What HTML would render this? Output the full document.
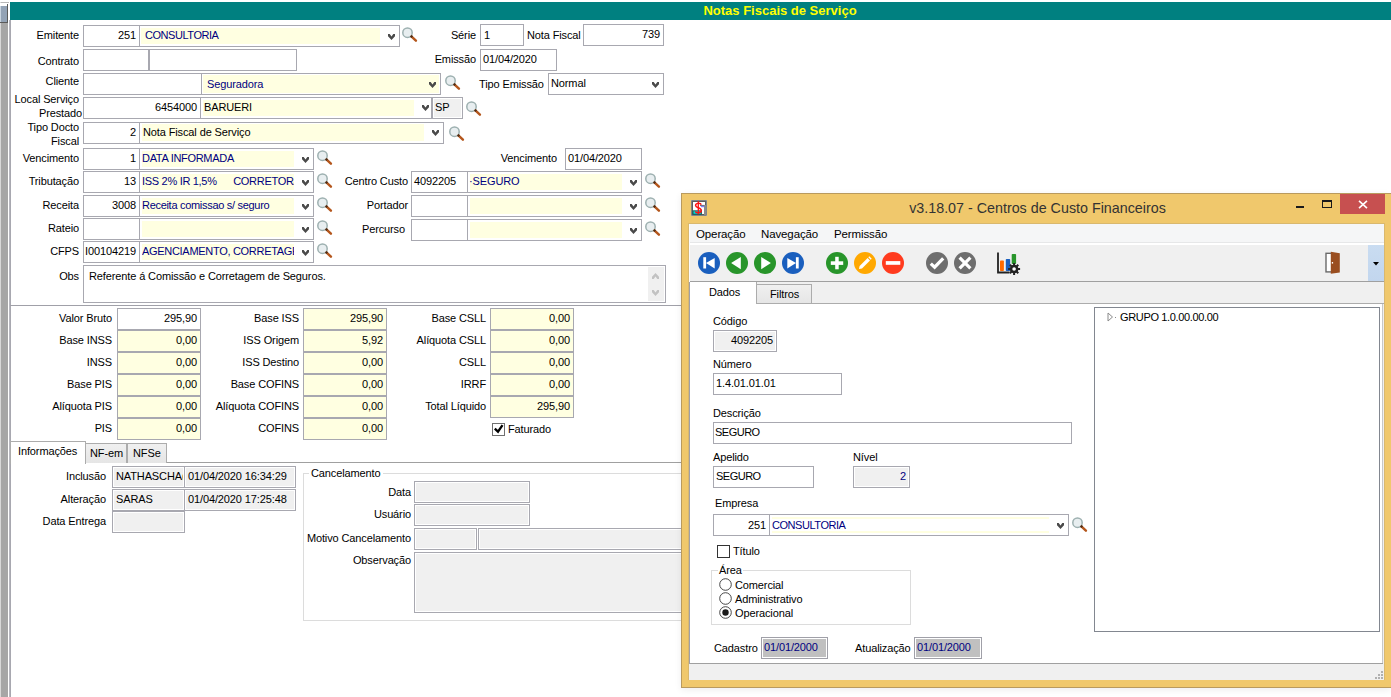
<!DOCTYPE html>
<html><head><meta charset="utf-8">
<style>
*{box-sizing:border-box}
html,body{margin:0;padding:0;width:1391px;height:697px;overflow:hidden;background:#fff;font-family:"Liberation Sans",sans-serif;font-size:11px;color:#000}
.a{position:absolute}
.t{position:absolute;white-space:nowrap;line-height:13px;font-size:11px;letter-spacing:-0.12px}
</style></head><body>

<div class="a" style="left:0px;top:0px;width:1px;height:697px;background:#d8d8d8;"></div>
<div class="a" style="left:1px;top:0px;width:7px;height:697px;background:#a6a6a6;"></div>
<div class="a" style="left:0px;top:0px;width:9px;height:2px;background:#ffffff;"></div>
<div class="a" style="left:1px;top:2px;width:8px;height:1px;background:#b8b8b8;"></div>
<div class="a" style="left:0px;top:3px;width:8px;height:3px;background:#ffffff;"></div>
<div class="a" style="left:0px;top:6px;width:1px;height:16px;background:#c8d4e0;"></div>
<div class="a" style="left:1px;top:6px;width:6px;height:16px;background:#93a3b6;"></div>
<div class="a" style="left:7px;top:4px;width:1px;height:19px;background:#5a5a5a;"></div>
<div class="a" style="left:0px;top:22px;width:8px;height:1px;background:#5a5a5a;"></div>
<div class="a" style="left:9px;top:20px;width:1px;height:677px;background:#b8b8c0;"></div>
<div class="a" style="left:10px;top:20px;width:1px;height:677px;background:#a8a8b0;"></div>
<div class="a" style="left:10px;top:2px;width:1381px;height:18px;background:#008080;"></div>
<div class="a" style="left:10px;top:2px;width:1540px;height:18px;line-height:18px;text-align:center;color:#ffff00;font-weight:bold;font-size:13px">Notas Fiscais de Serviço</div>
<div class="t" style="right:1312px;top:29px;color:#000;font-size:11px;text-align:right;">Emitente</div>
<div class="a" style="left:83px;top:25px;width:57px;height:22px;border:1px solid #a8a8b0;background:#fff;"></div>
<div class="t" style="right:1255px;top:29px;color:#000;font-size:11px;text-align:right;">251</div>
<div class="a" style="left:139px;top:25px;width:261px;height:22px;border:1px solid #a8a8b0;background:#fff;"></div>
<div class="a" style="left:141px;top:28px;width:239px;height:16px;background:#ffffe1;"></div>
<div class="t" style="left:145px;top:29px;color:#000080;font-size:11px;letter-spacing:-0.45px">CONSULTORIA</div>
<svg class="a" style="left:388px;top:34px" width="7" height="6" viewBox="0 0 7 6"><path d="M0 0 L1.7 0 L3.5 2.6 L5.3 0 L7 0 L7 2.3 L3.5 6 L0 2.3 Z" fill="#4a4a4a"/></svg>
<svg class="a" style="left:402px;top:27px" width="17" height="17" viewBox="0 0 17 17"><circle cx="5.5" cy="5.7" r="4.7" fill="#e8eef0" stroke="#9db0b0" stroke-width="1.5"/><path d="M9.6 9.6 L13.9 13.6" stroke="#b4561c" stroke-width="2.5" stroke-linecap="round"/><path d="M8.8 8.9 L10.2 10.2" stroke="#4a2c18" stroke-width="2.5"/></svg>
<div class="t" style="right:915px;top:29px;color:#000;font-size:11px;text-align:right;">Série</div>
<div class="a" style="left:480px;top:24px;width:44px;height:22px;border:1px solid #a8a8b0;background:#fff;"></div>
<div class="t" style="left:484px;top:29px;color:#000;font-size:11px;">1</div>
<div class="t" style="left:527px;top:29px;color:#000;font-size:11px;">Nota Fiscal</div>
<div class="a" style="left:583px;top:24px;width:81px;height:22px;border:1px solid #a8a8b0;background:#fff;"></div>
<div class="t" style="right:731px;top:28px;color:#000;font-size:11px;text-align:right;">739</div>
<div class="t" style="right:1312px;top:55px;color:#000;font-size:11px;text-align:right;">Contrato</div>
<div class="a" style="left:83px;top:49px;width:66px;height:22px;border:1px solid #a8a8b0;background:#fff;"></div>
<div class="a" style="left:149px;top:49px;width:148px;height:22px;border:1px solid #a8a8b0;background:#fff;"></div>
<div class="t" style="right:915px;top:53px;color:#000;font-size:11px;text-align:right;">Emissão</div>
<div class="a" style="left:480px;top:49px;width:77px;height:22px;border:1px solid #a8a8b0;background:#fff;"></div>
<div class="t" style="left:483px;top:53px;color:#000;font-size:11px;">01/04/2020</div>
<div class="t" style="right:1312px;top:75px;color:#000;font-size:11px;text-align:right;">Cliente</div>
<div class="a" style="left:83px;top:73px;width:119px;height:22px;border:1px solid #a8a8b0;background:#fff;"></div>
<div class="a" style="left:201px;top:73px;width:240px;height:22px;border:1px solid #a8a8b0;background:#fff;"></div>
<div class="a" style="left:203px;top:75px;width:236px;height:18px;background:#ffffe1;"></div>
<div class="t" style="left:207px;top:78px;color:#000080;font-size:11px;">Seguradora</div>
<svg class="a" style="left:429px;top:82px" width="7" height="6" viewBox="0 0 7 6"><path d="M0 0 L1.7 0 L3.5 2.6 L5.3 0 L7 0 L7 2.3 L3.5 6 L0 2.3 Z" fill="#4a4a4a"/></svg>
<svg class="a" style="left:445px;top:75px" width="17" height="17" viewBox="0 0 17 17"><circle cx="5.5" cy="5.7" r="4.7" fill="#e8eef0" stroke="#9db0b0" stroke-width="1.5"/><path d="M9.6 9.6 L13.9 13.6" stroke="#b4561c" stroke-width="2.5" stroke-linecap="round"/><path d="M8.8 8.9 L10.2 10.2" stroke="#4a2c18" stroke-width="2.5"/></svg>
<div class="t" style="left:479px;top:78px;color:#000;font-size:11px;">Tipo Emissão</div>
<div class="a" style="left:548px;top:73px;width:116px;height:22px;border:1px solid #a8a8b0;background:#fff;"></div>
<div class="t" style="left:551px;top:77px;color:#000;font-size:11px;">Normal</div>
<svg class="a" style="left:652px;top:82px" width="7" height="6" viewBox="0 0 7 6"><path d="M0 0 L1.7 0 L3.5 2.6 L5.3 0 L7 0 L7 2.3 L3.5 6 L0 2.3 Z" fill="#4a4a4a"/></svg>
<div class="t" style="right:1312px;top:93px;color:#000;font-size:11px;text-align:right;">Local Serviço</div>
<div class="t" style="right:1309px;top:107px;color:#000;font-size:11px;text-align:right;">Prestado</div>
<div class="a" style="left:83px;top:97px;width:118px;height:22px;border:1px solid #a8a8b0;background:#fff;"></div>
<div class="t" style="right:1194px;top:101px;color:#000;font-size:11px;text-align:right;">6454000</div>
<div class="a" style="left:200px;top:97px;width:232px;height:22px;border:1px solid #a8a8b0;background:#fff;"></div>
<div class="a" style="left:203px;top:100px;width:211px;height:16px;background:#ffffe1;"></div>
<div class="t" style="left:204px;top:101px;color:#000;font-size:11px;">BARUERI</div>
<svg class="a" style="left:422px;top:105px" width="7" height="6" viewBox="0 0 7 6"><path d="M0 0 L1.7 0 L3.5 2.6 L5.3 0 L7 0 L7 2.3 L3.5 6 L0 2.3 Z" fill="#4a4a4a"/></svg>
<div class="a" style="left:432px;top:97px;width:31px;height:22px;border:1px solid #a8a8b0;background:#f0f0f0;box-shadow:inset 1px 1px 0 #fff,inset -1px -1px 0 #fff"></div>
<div class="t" style="left:435px;top:101px;color:#000;font-size:11px;">SP</div>
<svg class="a" style="left:466px;top:101px" width="17" height="17" viewBox="0 0 17 17"><circle cx="5.5" cy="5.7" r="4.7" fill="#e8eef0" stroke="#9db0b0" stroke-width="1.5"/><path d="M9.6 9.6 L13.9 13.6" stroke="#b4561c" stroke-width="2.5" stroke-linecap="round"/><path d="M8.8 8.9 L10.2 10.2" stroke="#4a2c18" stroke-width="2.5"/></svg>
<div class="t" style="right:1312px;top:121px;color:#000;font-size:11px;text-align:right;">Tipo Docto</div>
<div class="t" style="right:1312px;top:135px;color:#000;font-size:11px;text-align:right;">Fiscal</div>
<div class="a" style="left:83px;top:122px;width:57px;height:22px;border:1px solid #a8a8b0;background:#fff;"></div>
<div class="t" style="right:1255px;top:126px;color:#000;font-size:11px;text-align:right;">2</div>
<div class="a" style="left:139px;top:122px;width:305px;height:22px;border:1px solid #a8a8b0;background:#fff;"></div>
<div class="a" style="left:142px;top:124px;width:282px;height:17px;background:#ffffe1;"></div>
<div class="t" style="left:143px;top:126px;color:#000;font-size:11px;">Nota Fiscal de Serviço</div>
<svg class="a" style="left:432px;top:130px" width="7" height="6" viewBox="0 0 7 6"><path d="M0 0 L1.7 0 L3.5 2.6 L5.3 0 L7 0 L7 2.3 L3.5 6 L0 2.3 Z" fill="#4a4a4a"/></svg>
<svg class="a" style="left:449px;top:126px" width="17" height="17" viewBox="0 0 17 17"><circle cx="5.5" cy="5.7" r="4.7" fill="#e8eef0" stroke="#9db0b0" stroke-width="1.5"/><path d="M9.6 9.6 L13.9 13.6" stroke="#b4561c" stroke-width="2.5" stroke-linecap="round"/><path d="M8.8 8.9 L10.2 10.2" stroke="#4a2c18" stroke-width="2.5"/></svg>
<div class="t" style="right:1312px;top:152px;color:#000;font-size:11px;text-align:right;">Vencimento</div>
<div class="a" style="left:83px;top:148px;width:57px;height:22px;border:1px solid #a8a8b0;background:#fff;"></div>
<div class="t" style="right:1255px;top:152px;color:#000;font-size:11px;text-align:right;">1</div>
<div class="a" style="left:139px;top:148px;width:175px;height:22px;border:1px solid #a8a8b0;background:#fff;"></div>
<div class="a" style="left:142px;top:151px;width:152px;height:16px;background:#ffffe1;"></div>
<div class="t" style="left:142px;top:152px;color:#000080;font-size:11px;width:152px;overflow:hidden;letter-spacing:-0.3px">DATA INFORMADA</div>
<svg class="a" style="left:302px;top:157px" width="7" height="6" viewBox="0 0 7 6"><path d="M0 0 L1.7 0 L3.5 2.6 L5.3 0 L7 0 L7 2.3 L3.5 6 L0 2.3 Z" fill="#4a4a4a"/></svg>
<svg class="a" style="left:317px;top:150px" width="17" height="17" viewBox="0 0 17 17"><circle cx="5.5" cy="5.7" r="4.7" fill="#e8eef0" stroke="#9db0b0" stroke-width="1.5"/><path d="M9.6 9.6 L13.9 13.6" stroke="#b4561c" stroke-width="2.5" stroke-linecap="round"/><path d="M8.8 8.9 L10.2 10.2" stroke="#4a2c18" stroke-width="2.5"/></svg>
<div class="t" style="right:1312px;top:175px;color:#000;font-size:11px;text-align:right;">Tributação</div>
<div class="a" style="left:83px;top:171px;width:57px;height:22px;border:1px solid #a8a8b0;background:#fff;"></div>
<div class="t" style="right:1255px;top:175px;color:#000;font-size:11px;text-align:right;">13</div>
<div class="a" style="left:139px;top:171px;width:175px;height:22px;border:1px solid #a8a8b0;background:#fff;"></div>
<div class="a" style="left:142px;top:174px;width:152px;height:16px;background:#ffffe1;"></div>
<div class="t" style="left:142px;top:175px;color:#000080;font-size:11px;width:152px;overflow:hidden;letter-spacing:-0.3px">ISS 2% IR 1,5% &nbsp;&nbsp;&nbsp;&nbsp; CORRETOR/</div>
<svg class="a" style="left:302px;top:180px" width="7" height="6" viewBox="0 0 7 6"><path d="M0 0 L1.7 0 L3.5 2.6 L5.3 0 L7 0 L7 2.3 L3.5 6 L0 2.3 Z" fill="#4a4a4a"/></svg>
<svg class="a" style="left:317px;top:173px" width="17" height="17" viewBox="0 0 17 17"><circle cx="5.5" cy="5.7" r="4.7" fill="#e8eef0" stroke="#9db0b0" stroke-width="1.5"/><path d="M9.6 9.6 L13.9 13.6" stroke="#b4561c" stroke-width="2.5" stroke-linecap="round"/><path d="M8.8 8.9 L10.2 10.2" stroke="#4a2c18" stroke-width="2.5"/></svg>
<div class="t" style="right:1312px;top:199px;color:#000;font-size:11px;text-align:right;">Receita</div>
<div class="a" style="left:83px;top:195px;width:57px;height:22px;border:1px solid #a8a8b0;background:#fff;"></div>
<div class="t" style="right:1255px;top:199px;color:#000;font-size:11px;text-align:right;">3008</div>
<div class="a" style="left:139px;top:195px;width:175px;height:22px;border:1px solid #a8a8b0;background:#fff;"></div>
<div class="a" style="left:142px;top:198px;width:152px;height:16px;background:#ffffe1;"></div>
<div class="t" style="left:142px;top:199px;color:#000080;font-size:11px;width:152px;overflow:hidden;letter-spacing:-0.3px">Receita comissao s/ seguro</div>
<svg class="a" style="left:302px;top:204px" width="7" height="6" viewBox="0 0 7 6"><path d="M0 0 L1.7 0 L3.5 2.6 L5.3 0 L7 0 L7 2.3 L3.5 6 L0 2.3 Z" fill="#4a4a4a"/></svg>
<svg class="a" style="left:317px;top:197px" width="17" height="17" viewBox="0 0 17 17"><circle cx="5.5" cy="5.7" r="4.7" fill="#e8eef0" stroke="#9db0b0" stroke-width="1.5"/><path d="M9.6 9.6 L13.9 13.6" stroke="#b4561c" stroke-width="2.5" stroke-linecap="round"/><path d="M8.8 8.9 L10.2 10.2" stroke="#4a2c18" stroke-width="2.5"/></svg>
<div class="t" style="right:1312px;top:222px;color:#000;font-size:11px;text-align:right;">Rateio</div>
<div class="a" style="left:83px;top:218px;width:57px;height:22px;border:1px solid #a8a8b0;background:#fff;"></div>
<div class="a" style="left:139px;top:218px;width:175px;height:22px;border:1px solid #a8a8b0;background:#fff;"></div>
<div class="a" style="left:142px;top:221px;width:152px;height:16px;background:#ffffe1;"></div>
<svg class="a" style="left:302px;top:227px" width="7" height="6" viewBox="0 0 7 6"><path d="M0 0 L1.7 0 L3.5 2.6 L5.3 0 L7 0 L7 2.3 L3.5 6 L0 2.3 Z" fill="#4a4a4a"/></svg>
<svg class="a" style="left:317px;top:220px" width="17" height="17" viewBox="0 0 17 17"><circle cx="5.5" cy="5.7" r="4.7" fill="#e8eef0" stroke="#9db0b0" stroke-width="1.5"/><path d="M9.6 9.6 L13.9 13.6" stroke="#b4561c" stroke-width="2.5" stroke-linecap="round"/><path d="M8.8 8.9 L10.2 10.2" stroke="#4a2c18" stroke-width="2.5"/></svg>
<div class="t" style="right:1312px;top:245px;color:#000;font-size:11px;text-align:right;">CFPS</div>
<div class="a" style="left:83px;top:241px;width:57px;height:22px;border:1px solid #a8a8b0;background:#fff;"></div>
<div class="t" style="right:1255px;top:245px;color:#000;font-size:11px;text-align:right;">I00104219</div>
<div class="a" style="left:139px;top:241px;width:175px;height:22px;border:1px solid #a8a8b0;background:#fff;"></div>
<div class="a" style="left:142px;top:244px;width:152px;height:16px;background:#ffffe1;"></div>
<div class="t" style="left:142px;top:245px;color:#000080;font-size:11px;width:152px;overflow:hidden;letter-spacing:-0.3px">AGENCIAMENTO, CORRETAGEI</div>
<svg class="a" style="left:302px;top:250px" width="7" height="6" viewBox="0 0 7 6"><path d="M0 0 L1.7 0 L3.5 2.6 L5.3 0 L7 0 L7 2.3 L3.5 6 L0 2.3 Z" fill="#4a4a4a"/></svg>
<svg class="a" style="left:317px;top:243px" width="17" height="17" viewBox="0 0 17 17"><circle cx="5.5" cy="5.7" r="4.7" fill="#e8eef0" stroke="#9db0b0" stroke-width="1.5"/><path d="M9.6 9.6 L13.9 13.6" stroke="#b4561c" stroke-width="2.5" stroke-linecap="round"/><path d="M8.8 8.9 L10.2 10.2" stroke="#4a2c18" stroke-width="2.5"/></svg>
<div class="t" style="right:834px;top:152px;color:#000;font-size:11px;text-align:right;">Vencimento</div>
<div class="a" style="left:565px;top:148px;width:77px;height:22px;border:1px solid #a8a8b0;background:#fff;"></div>
<div class="t" style="left:568px;top:152px;color:#000;font-size:11px;">01/04/2020</div>
<div class="t" style="right:983px;top:175px;color:#000;font-size:11px;text-align:right;">Centro Custo</div>
<div class="a" style="left:411px;top:171px;width:57px;height:22px;border:1px solid #a8a8b0;background:#fff;"></div>
<div class="t" style="left:414px;top:175px;color:#000;font-size:11px;">4092205</div>
<div class="a" style="left:467px;top:171px;width:175px;height:22px;border:1px solid #a8a8b0;background:#fff;"></div>
<div class="a" style="left:470px;top:174px;width:152px;height:16px;background:#ffffe1;"></div>
<div class="t" style="left:469px;top:175px;color:#000080;font-size:11px;">·SEGURO</div>
<svg class="a" style="left:630px;top:180px" width="7" height="6" viewBox="0 0 7 6"><path d="M0 0 L1.7 0 L3.5 2.6 L5.3 0 L7 0 L7 2.3 L3.5 6 L0 2.3 Z" fill="#4a4a4a"/></svg>
<svg class="a" style="left:645px;top:173px" width="17" height="17" viewBox="0 0 17 17"><circle cx="5.5" cy="5.7" r="4.7" fill="#e8eef0" stroke="#9db0b0" stroke-width="1.5"/><path d="M9.6 9.6 L13.9 13.6" stroke="#b4561c" stroke-width="2.5" stroke-linecap="round"/><path d="M8.8 8.9 L10.2 10.2" stroke="#4a2c18" stroke-width="2.5"/></svg>
<div class="t" style="right:983px;top:199px;color:#000;font-size:11px;text-align:right;">Portador</div>
<div class="a" style="left:411px;top:195px;width:57px;height:22px;border:1px solid #a8a8b0;background:#fff;"></div>
<div class="a" style="left:467px;top:195px;width:175px;height:22px;border:1px solid #a8a8b0;background:#fff;"></div>
<div class="a" style="left:470px;top:198px;width:152px;height:16px;background:#ffffe1;"></div>
<svg class="a" style="left:630px;top:204px" width="7" height="6" viewBox="0 0 7 6"><path d="M0 0 L1.7 0 L3.5 2.6 L5.3 0 L7 0 L7 2.3 L3.5 6 L0 2.3 Z" fill="#4a4a4a"/></svg>
<svg class="a" style="left:645px;top:197px" width="17" height="17" viewBox="0 0 17 17"><circle cx="5.5" cy="5.7" r="4.7" fill="#e8eef0" stroke="#9db0b0" stroke-width="1.5"/><path d="M9.6 9.6 L13.9 13.6" stroke="#b4561c" stroke-width="2.5" stroke-linecap="round"/><path d="M8.8 8.9 L10.2 10.2" stroke="#4a2c18" stroke-width="2.5"/></svg>
<div class="t" style="right:986px;top:223px;color:#000;font-size:11px;text-align:right;">Percurso</div>
<div class="a" style="left:411px;top:219px;width:57px;height:22px;border:1px solid #a8a8b0;background:#fff;"></div>
<div class="a" style="left:467px;top:219px;width:175px;height:22px;border:1px solid #a8a8b0;background:#fff;"></div>
<div class="a" style="left:470px;top:222px;width:152px;height:16px;background:#ffffe1;"></div>
<svg class="a" style="left:630px;top:228px" width="7" height="6" viewBox="0 0 7 6"><path d="M0 0 L1.7 0 L3.5 2.6 L5.3 0 L7 0 L7 2.3 L3.5 6 L0 2.3 Z" fill="#4a4a4a"/></svg>
<svg class="a" style="left:645px;top:221px" width="17" height="17" viewBox="0 0 17 17"><circle cx="5.5" cy="5.7" r="4.7" fill="#e8eef0" stroke="#9db0b0" stroke-width="1.5"/><path d="M9.6 9.6 L13.9 13.6" stroke="#b4561c" stroke-width="2.5" stroke-linecap="round"/><path d="M8.8 8.9 L10.2 10.2" stroke="#4a2c18" stroke-width="2.5"/></svg>
<div class="t" style="right:1312px;top:270px;color:#000;font-size:11px;text-align:right;">Obs</div>
<div class="a" style="left:83px;top:265px;width:583px;height:38px;border:1px solid #a8a8b0;background:#fff;"></div>
<div class="t" style="left:89px;top:270px;color:#000;font-size:11px;">Referente á Comissão e Corretagem de Seguros.</div>
<div class="a" style="left:648px;top:267px;width:16px;height:34px;background:#f0f0f0;"></div>
<svg class="a" style="left:652px;top:273px" width="7" height="6" viewBox="0 0 7 6"><path d="M0 6 L1.7 6 L3.5 3.4 L5.3 6 L7 6 L7 3.7 L3.5 0 L0 3.7 Z" fill="#c2c2c2"/></svg>
<svg class="a" style="left:652px;top:290px" width="7" height="6" viewBox="0 0 7 6"><path d="M0 0 L1.7 0 L3.5 2.6 L5.3 0 L7 0 L7 2.3 L3.5 6 L0 2.3 Z" fill="#c2c2c2"/></svg>
<div class="a" style="left:10px;top:305px;width:671px;height:1px;background:#a0a0a8;"></div>
<div class="t" style="right:1279px;top:312px;color:#000;font-size:11px;text-align:right;">Valor Bruto</div>
<div class="a" style="left:117px;top:308px;width:84px;height:22px;border:1px solid #a8a8b0;background:#fff;"></div>
<div class="t" style="right:1194px;top:312px;color:#000;font-size:11px;text-align:right;">295,90</div>
<div class="t" style="right:1279px;top:334px;color:#000;font-size:11px;text-align:right;">Base INSS</div>
<div class="a" style="left:117px;top:330px;width:84px;height:22px;border:1px solid #a8a8b0;background:#ffffe1;"></div>
<div class="t" style="right:1194px;top:334px;color:#000;font-size:11px;text-align:right;">0,00</div>
<div class="t" style="right:1279px;top:356px;color:#000;font-size:11px;text-align:right;">INSS</div>
<div class="a" style="left:117px;top:352px;width:84px;height:22px;border:1px solid #a8a8b0;background:#ffffe1;"></div>
<div class="t" style="right:1194px;top:356px;color:#000;font-size:11px;text-align:right;">0,00</div>
<div class="t" style="right:1279px;top:378px;color:#000;font-size:11px;text-align:right;">Base PIS</div>
<div class="a" style="left:117px;top:374px;width:84px;height:22px;border:1px solid #a8a8b0;background:#ffffe1;"></div>
<div class="t" style="right:1194px;top:378px;color:#000;font-size:11px;text-align:right;">0,00</div>
<div class="t" style="right:1279px;top:400px;color:#000;font-size:11px;text-align:right;">Alíquota PIS</div>
<div class="a" style="left:117px;top:396px;width:84px;height:22px;border:1px solid #a8a8b0;background:#ffffe1;"></div>
<div class="t" style="right:1194px;top:400px;color:#000;font-size:11px;text-align:right;">0,00</div>
<div class="t" style="right:1279px;top:422px;color:#000;font-size:11px;text-align:right;">PIS</div>
<div class="a" style="left:117px;top:418px;width:84px;height:22px;border:1px solid #a8a8b0;background:#ffffe1;"></div>
<div class="t" style="right:1194px;top:422px;color:#000;font-size:11px;text-align:right;">0,00</div>
<div class="t" style="right:1092px;top:312px;color:#000;font-size:11px;text-align:right;">Base ISS</div>
<div class="a" style="left:303px;top:308px;width:84px;height:22px;border:1px solid #a8a8b0;background:#ffffe1;"></div>
<div class="t" style="right:1008px;top:312px;color:#000;font-size:11px;text-align:right;">295,90</div>
<div class="t" style="right:1092px;top:334px;color:#000;font-size:11px;text-align:right;">ISS Origem</div>
<div class="a" style="left:303px;top:330px;width:84px;height:22px;border:1px solid #a8a8b0;background:#ffffe1;"></div>
<div class="t" style="right:1008px;top:334px;color:#000;font-size:11px;text-align:right;">5,92</div>
<div class="t" style="right:1092px;top:356px;color:#000;font-size:11px;text-align:right;">ISS Destino</div>
<div class="a" style="left:303px;top:352px;width:84px;height:22px;border:1px solid #a8a8b0;background:#ffffe1;"></div>
<div class="t" style="right:1008px;top:356px;color:#000;font-size:11px;text-align:right;">0,00</div>
<div class="t" style="right:1092px;top:378px;color:#000;font-size:11px;text-align:right;">Base COFINS</div>
<div class="a" style="left:303px;top:374px;width:84px;height:22px;border:1px solid #a8a8b0;background:#ffffe1;"></div>
<div class="t" style="right:1008px;top:378px;color:#000;font-size:11px;text-align:right;">0,00</div>
<div class="t" style="right:1092px;top:400px;color:#000;font-size:11px;text-align:right;">Alíquota COFINS</div>
<div class="a" style="left:303px;top:396px;width:84px;height:22px;border:1px solid #a8a8b0;background:#ffffe1;"></div>
<div class="t" style="right:1008px;top:400px;color:#000;font-size:11px;text-align:right;">0,00</div>
<div class="t" style="right:1092px;top:422px;color:#000;font-size:11px;text-align:right;">COFINS</div>
<div class="a" style="left:303px;top:418px;width:84px;height:22px;border:1px solid #a8a8b0;background:#ffffe1;"></div>
<div class="t" style="right:1008px;top:422px;color:#000;font-size:11px;text-align:right;">0,00</div>
<div class="t" style="right:905px;top:312px;color:#000;font-size:11px;text-align:right;">Base CSLL</div>
<div class="a" style="left:490px;top:308px;width:84px;height:22px;border:1px solid #a8a8b0;background:#ffffe1;"></div>
<div class="t" style="right:821px;top:312px;color:#000;font-size:11px;text-align:right;">0,00</div>
<div class="t" style="right:905px;top:334px;color:#000;font-size:11px;text-align:right;">Alíquota CSLL</div>
<div class="a" style="left:490px;top:330px;width:84px;height:22px;border:1px solid #a8a8b0;background:#ffffe1;"></div>
<div class="t" style="right:821px;top:334px;color:#000;font-size:11px;text-align:right;">0,00</div>
<div class="t" style="right:905px;top:356px;color:#000;font-size:11px;text-align:right;">CSLL</div>
<div class="a" style="left:490px;top:352px;width:84px;height:22px;border:1px solid #a8a8b0;background:#ffffe1;"></div>
<div class="t" style="right:821px;top:356px;color:#000;font-size:11px;text-align:right;">0,00</div>
<div class="t" style="right:905px;top:378px;color:#000;font-size:11px;text-align:right;">IRRF</div>
<div class="a" style="left:490px;top:374px;width:84px;height:22px;border:1px solid #a8a8b0;background:#ffffe1;"></div>
<div class="t" style="right:821px;top:378px;color:#000;font-size:11px;text-align:right;">0,00</div>
<div class="t" style="right:905px;top:400px;color:#000;font-size:11px;text-align:right;">Total Líquido</div>
<div class="a" style="left:490px;top:396px;width:84px;height:22px;border:1px solid #a8a8b0;background:#ffffe1;"></div>
<div class="t" style="right:821px;top:400px;color:#000;font-size:11px;text-align:right;">295,90</div>
<div class="a" style="left:492px;top:423px;width:13px;height:13px;border:1px solid #707070;background:#fff;"></div>
<svg class="a" style="left:492px;top:423px" width="13" height="13" viewBox="0 0 13 13"><path d="M2.8 5.7 L6 8.7 L10.5 2.2" fill="none" stroke="#000" stroke-width="2.3"/></svg>
<div class="t" style="left:508px;top:423px;color:#000;font-size:11px;">Faturado</div>
<div class="a" style="left:10px;top:462px;width:671px;height:1px;background:#a0a0a0;"></div>
<div class="a" style="left:85px;top:443px;width:42px;height:20px;border:1px solid #acacac;border-bottom:none;background:linear-gradient(#f0f0f0,#e5e5e5)"></div>
<div class="a" style="left:127px;top:443px;width:40px;height:20px;border:1px solid #acacac;border-bottom:none;background:linear-gradient(#f0f0f0,#e5e5e5)"></div>
<div class="a" style="left:10px;top:441px;width:76px;height:23px;border:1px solid #acacac;border-bottom:none;background:#fff"></div>
<div class="t" style="left:18px;top:445px;color:#000;font-size:11px;">Informações</div>
<div class="t" style="left:90px;top:447px;color:#000;font-size:11px;">NF-em</div>
<div class="t" style="left:133px;top:447px;color:#000;font-size:11px;">NFSe</div>
<div class="t" style="right:1285px;top:470px;color:#000;font-size:11px;text-align:right;">Inclusão</div>
<div class="a" style="left:112px;top:466px;width:73px;height:22px;border:1px solid #a8a8b0;background:#f0f0f0;box-shadow:inset 1px 1px 0 #fff,inset -1px -1px 0 #fff"></div>
<div class="t" style="left:116px;top:470px;color:#000;font-size:11px;width:67px;overflow:hidden">NATHASCHA(</div>
<div class="a" style="left:184px;top:466px;width:112px;height:22px;border:1px solid #a8a8b0;background:#f0f0f0;box-shadow:inset 1px 1px 0 #fff,inset -1px -1px 0 #fff"></div>
<div class="t" style="left:188px;top:470px;color:#000;font-size:11px;">01/04/2020 16:34:29</div>
<div class="t" style="right:1285px;top:493px;color:#000;font-size:11px;text-align:right;">Alteração</div>
<div class="a" style="left:112px;top:489px;width:73px;height:22px;border:1px solid #a8a8b0;background:#f0f0f0;box-shadow:inset 1px 1px 0 #fff,inset -1px -1px 0 #fff"></div>
<div class="t" style="left:116px;top:493px;color:#000;font-size:11px;">SARAS</div>
<div class="a" style="left:184px;top:489px;width:112px;height:22px;border:1px solid #a8a8b0;background:#f0f0f0;box-shadow:inset 1px 1px 0 #fff,inset -1px -1px 0 #fff"></div>
<div class="t" style="left:188px;top:493px;color:#000;font-size:11px;">01/04/2020 17:25:48</div>
<div class="t" style="right:1285px;top:515px;color:#000;font-size:11px;text-align:right;">Data Entrega</div>
<div class="a" style="left:112px;top:511px;width:73px;height:22px;border:1px solid #a8a8b0;background:#f0f0f0;box-shadow:inset 1px 1px 0 #fff,inset -1px -1px 0 #fff"></div>
<div class="a" style="left:303px;top:473px;width:400px;height:148px;border:1px solid #dcdcdc"></div>
<div class="t" style="left:309px;top:467px;background:#fff;padding:0 2px">Cancelamento</div>
<div class="t" style="right:980px;top:486px;color:#000;font-size:11px;text-align:right;">Data</div>
<div class="a" style="left:414px;top:481px;width:116px;height:22px;border:1px solid #a8a8b0;background:#f0f0f0;box-shadow:inset 1px 1px 0 #fff,inset -1px -1px 0 #fff"></div>
<div class="t" style="right:980px;top:508px;color:#000;font-size:11px;text-align:right;">Usuário</div>
<div class="a" style="left:414px;top:504px;width:116px;height:22px;border:1px solid #a8a8b0;background:#f0f0f0;box-shadow:inset 1px 1px 0 #fff,inset -1px -1px 0 #fff"></div>
<div class="t" style="right:980px;top:532px;color:#000;font-size:11px;text-align:right;">Motivo Cancelamento</div>
<div class="a" style="left:414px;top:528px;width:63px;height:22px;border:1px solid #a8a8b0;background:#f0f0f0;box-shadow:inset 1px 1px 0 #fff,inset -1px -1px 0 #fff"></div>
<div class="a" style="left:478px;top:528px;width:222px;height:22px;border:1px solid #a8a8b0;background:#f0f0f0;box-shadow:inset 1px 1px 0 #fff,inset -1px -1px 0 #fff"></div>
<div class="t" style="right:980px;top:554px;color:#000;font-size:11px;text-align:right;">Observação</div>
<div class="a" style="left:414px;top:552px;width:286px;height:61px;border:1px solid #a8a8b0;background:#f0f0f0;box-shadow:inset 1px 1px 0 #fff,inset -1px -1px 0 #fff"></div>
<div class="a" style="left:681px;top:193px;width:710px;height:495px;background:#f0c86c;border:1px solid #b99a5e;border-right:none;box-shadow:0 2px 7px rgba(0,0,0,0.07)"></div>
<svg class="a" style="left:691px;top:200px" width="16" height="16" viewBox="0 0 16 16"><rect x="0" y="0" width="16" height="16" fill="#b4bccb"/><rect x="1.2" y="1.2" width="13.6" height="13.6" fill="#fff" stroke="#5e5e5e" stroke-width="1.6"/><path d="M9 5.5 L14 5.5" stroke="#707070" stroke-width="1.2"/><rect x="13" y="5" width="2" height="10" fill="#8a8a8a"/><rect x="2" y="10.8" width="8.5" height="3.4" fill="#00d8d8" stroke="#0a5050" stroke-width="0.8"/><rect x="10" y="5.8" width="3" height="1.4" fill="#8080ff"/><path d="M10.3 4.6 C9.5 2.8 4.2 2.8 4.6 5.6 C5 8 10.6 7.6 10.3 10.6 C10 13.2 4.8 13.2 4.4 11.4" fill="none" stroke="#ff1010" stroke-width="1.5"/><path d="M7.3 1.3 L7.3 14.3" stroke="#ff1010" stroke-width="1.3"/></svg>
<div class="a" style="left:895px;top:199px;width:285px;text-align:center;font-size:14.3px;line-height:18px;color:#333;white-space:nowrap">v3.18.07 - Centros de Custo Financeiros</div>
<div class="a" style="left:1296px;top:206px;width:8px;height:2px;background:#1a1a1a;"></div>
<div class="a" style="left:1322px;top:200px;width:10px;height:8px;border:1px solid #1a1a1a;border-top:2px solid #1a1a1a"></div>
<div class="a" style="left:1340px;top:194px;width:45px;height:20px;background:#c75050;"></div>
<svg class="a" style="left:1358px;top:200px" width="10" height="9" viewBox="0 0 10 9"><path d="M1 0.8 L9 8.2 M9 0.8 L1 8.2" stroke="#fff" stroke-width="1.6"/></svg>
<div class="a" style="left:688px;top:223px;width:697px;height:457px;background:#d9b86e;"></div>
<div class="a" style="left:689px;top:224px;width:695px;height:456px;background:#f0f0f0;"></div>
<div class="a" style="left:689px;top:224px;width:1px;height:58px;background:#fbfbfc;"></div>
<div class="a" style="left:690px;top:224px;width:694px;height:18px;background:#f5f6f7;"></div>
<div class="a" style="left:690px;top:242px;width:694px;height:1px;background:#e6e7e8;"></div>
<div class="a" style="left:690px;top:243px;width:694px;height:2px;background:#ffffff;"></div>
<div class="t" style="left:696px;top:227px;font-size:11.5px;line-height:14px;color:#000">Operação</div>
<div class="t" style="left:761px;top:227px;font-size:11.5px;line-height:14px;color:#000">Navegação</div>
<div class="t" style="left:834px;top:227px;font-size:11.5px;line-height:14px;color:#000">Permissão</div>
<div class="a" style="left:690px;top:245px;width:694px;height:36px;background:#f0f0f0;"></div>
<div class="a" style="left:690px;top:281px;width:694px;height:1px;background:#a0a0a0;"></div>
<div class="a" style="left:1368px;top:245px;width:16px;height:36px;background:linear-gradient(#c9dcf1,#c2d6ee)"></div>
<svg class="a" style="left:1373px;top:262px" width="6" height="4" viewBox="0 0 6 4"><path d="M0 0 L6 0 L3 3.6 Z" fill="#000"/></svg>
<svg class="a" style="left:698px;top:252px" width="22" height="22" viewBox="0 0 22 22"><circle cx="11" cy="11" r="11" fill="#1a5fbe"/><rect x="5.3" y="5.2" width="2.8" height="11.3" fill="#fff"/><path d="M8 11 L16.7 6 L16.7 16.5 Z" fill="#fff"/></svg>
<svg class="a" style="left:726px;top:252px" width="22" height="22" viewBox="0 0 22 22"><circle cx="11" cy="11" r="11" fill="#28952a"/><path d="M5.1 11 L14.8 5 L14.8 17.3 Z" fill="#fff"/></svg>
<svg class="a" style="left:754px;top:252px" width="22" height="22" viewBox="0 0 22 22"><circle cx="11" cy="11" r="11" fill="#28952a"/><path d="M16.9 11 L7.2 5 L7.2 17.3 Z" fill="#fff"/></svg>
<svg class="a" style="left:782px;top:252px" width="22" height="22" viewBox="0 0 22 22"><circle cx="11" cy="11" r="11" fill="#1a5fbe"/><rect x="13.9" y="5.2" width="2.8" height="11.3" fill="#fff"/><path d="M14 11 L5.3 6 L5.3 16.5 Z" fill="#fff"/></svg>
<svg class="a" style="left:826px;top:252px" width="22" height="22" viewBox="0 0 22 22"><circle cx="11" cy="11" r="11" fill="#28952a"/><rect x="4.8" y="9.3" width="12.4" height="3.6" fill="#fff"/><rect x="9.2" y="4.8" width="3.5" height="12.5" fill="#fff"/></svg>
<svg class="a" style="left:854px;top:252px" width="22" height="22" viewBox="0 0 22 22"><circle cx="11" cy="11" r="11" fill="#ffa800"/><path d="M5 17 L5.6 14 L13.6 6 L16 8.4 L8 16.4 Z" fill="#fff"/><path d="M14.3 5.3 L15.3 4.3 L17.7 6.7 L16.7 7.7 Z" fill="#fff"/></svg>
<svg class="a" style="left:882px;top:252px" width="22" height="22" viewBox="0 0 22 22"><circle cx="11" cy="11" r="11" fill="#ff3b1e"/><rect x="3.8" y="9.1" width="14.5" height="3.7" fill="#fff"/></svg>
<svg class="a" style="left:926px;top:252px" width="22" height="22" viewBox="0 0 22 22"><circle cx="11" cy="11" r="11" fill="#6e6e6e"/><path d="M4.8 11.6 L8.6 15.2 L17.2 6.4" fill="none" stroke="#fff" stroke-width="3.2"/></svg>
<svg class="a" style="left:954px;top:252px" width="22" height="22" viewBox="0 0 22 22"><circle cx="11" cy="11" r="11" fill="#6e6e6e"/><path d="M5.6 5.6 L16.4 16.4 M16.4 5.6 L5.6 16.4" stroke="#fff" stroke-width="3.2"/></svg>
<svg class="a" style="left:996px;top:251px" width="26" height="24" viewBox="0 0 26 24"><path d="M2 1.5 L2 21.5 L13.5 21.5" fill="none" stroke="#222" stroke-width="1.8"/><rect x="4" y="9.5" width="3.9" height="10.5" rx="0.8" fill="#ff6a00"/><rect x="9.8" y="8" width="4.4" height="12" rx="0.8" fill="#1a5fbe"/><rect x="15.7" y="3" width="4.4" height="10" rx="0.8" fill="#28952a"/><g transform="translate(18.1,18)"><circle r="4.3" fill="#222"/><path d="M0 -6 L0 6 M-6 0 L6 0 M-4.2 -4.2 L4.2 4.2 M4.2 -4.2 L-4.2 4.2" stroke="#222" stroke-width="2"/><circle r="1.8" fill="#fff"/></g></svg>
<svg class="a" style="left:1324px;top:251px" width="18" height="24" viewBox="0 0 18 24"><rect x="2" y="2.3" width="6" height="18.6" fill="#fff" stroke="#6a6a6a" stroke-width="1.4"/><path d="M6.8 0.7 L15.8 2.2 L15.8 21.5 L6.8 22.7 Z" fill="#9a4e20"/><rect x="7.8" y="11" width="1.3" height="1.6" fill="#fff"/></svg>
<div class="a" style="left:690px;top:282px;width:694px;height:21px;background:#f0f0f0;"></div>
<div class="a" style="left:756px;top:284px;width:56px;height:20px;border:1px solid #acacac;border-bottom:none;background:linear-gradient(#f0f0f0,#e5e5e5)"></div>
<div class="a" style="left:690px;top:282px;width:67px;height:22px;background:#fff;"></div>
<div class="a" style="left:756px;top:282px;width:1px;height:22px;background:#acacac;"></div>
<div class="t" style="left:709px;top:286px;color:#000;font-size:11px;">Dados</div>
<div class="t" style="left:770px;top:288px;color:#000;font-size:11px;">Filtros</div>
<div class="a" style="left:757px;top:303px;width:627px;height:1px;background:#acacac;"></div>
<div class="a" style="left:690px;top:304px;width:693px;height:360px;background:#fff;"></div>
<div class="a" style="left:1382px;top:304px;width:1px;height:360px;background:#c8c8c8;"></div>
<div class="a" style="left:689px;top:663px;width:694px;height:1px;background:#a0a0a0;"></div>
<div class="a" style="left:689px;top:282px;width:1px;height:382px;background:#a0a0a8;"></div>
<div class="a" style="left:689px;top:664px;width:695px;height:16px;background:#f0f0f0;"></div>
<div class="a" style="left:1375px;top:671px;width:8px;height:8px;background:#f0f0f0;"></div>
<svg class="a" style="left:1374px;top:670px" width="10" height="10" viewBox="0 0 10 10" fill="#b0b0b0"><rect x="7" y="1" width="2" height="2"/><rect x="7" y="4" width="2" height="2"/><rect x="4" y="4" width="2" height="2"/><rect x="7" y="7" width="2" height="2"/><rect x="4" y="7" width="2" height="2"/><rect x="1" y="7" width="2" height="2"/></svg>
<div class="t" style="left:713px;top:315px;color:#000;font-size:11px;">Código</div>
<div class="a" style="left:713px;top:330px;width:64px;height:22px;border:1px solid #a8a8b0;background:#f0f0f0;box-shadow:inset 1px 1px 0 #fff,inset -1px -1px 0 #fff"></div>
<div class="t" style="right:618px;top:334px;color:#000;font-size:11px;text-align:right;">4092205</div>
<div class="t" style="left:713px;top:358px;color:#000;font-size:11px;">Número</div>
<div class="a" style="left:713px;top:373px;width:129px;height:22px;border:1px solid #a8a8b0;background:#fff;"></div>
<div class="t" style="left:716px;top:377px;color:#000;font-size:11px;">1.4.01.01.01</div>
<div class="t" style="left:713px;top:407px;color:#000;font-size:11px;">Descrição</div>
<div class="a" style="left:713px;top:422px;width:359px;height:22px;border:1px solid #a8a8b0;background:#fff;"></div>
<div class="t" style="left:715px;top:426px;color:#000;font-size:11px;letter-spacing:-0.5px">SEGURO</div>
<div class="t" style="left:713px;top:451px;color:#000;font-size:11px;">Apelido</div>
<div class="a" style="left:713px;top:466px;width:101px;height:22px;border:1px solid #a8a8b0;background:#fff;"></div>
<div class="t" style="left:716px;top:470px;color:#000;font-size:11px;letter-spacing:-0.5px">SEGURO</div>
<div class="t" style="left:853px;top:451px;color:#000;font-size:11px;">Nível</div>
<div class="a" style="left:853px;top:466px;width:57px;height:22px;border:1px solid #a8a8b0;background:#f0f0f0;box-shadow:inset 1px 1px 0 #fff,inset -1px -1px 0 #fff"></div>
<div class="t" style="right:485px;top:470px;color:#000080;font-size:11px;text-align:right;">2</div>
<div class="t" style="left:715px;top:497px;color:#000;font-size:11px;">Empresa</div>
<div class="a" style="left:713px;top:514px;width:57px;height:22px;border:1px solid #a8a8b0;background:#fff;"></div>
<div class="t" style="right:625px;top:519px;color:#000;font-size:11px;text-align:right;">251</div>
<div class="a" style="left:769px;top:514px;width:300px;height:22px;border:1px solid #a8a8b0;background:#fff;"></div>
<div class="a" style="left:772px;top:517px;width:277px;height:2px;background:#ffffe1;"></div>
<div class="a" style="left:772px;top:531px;width:277px;height:2px;background:#ffffe1;"></div>
<div class="t" style="left:772px;top:519px;color:#000080;font-size:11px;letter-spacing:-0.45px">CONSULTORIA</div>
<svg class="a" style="left:1057px;top:523px" width="7" height="6" viewBox="0 0 7 6"><path d="M0 0 L1.7 0 L3.5 2.6 L5.3 0 L7 0 L7 2.3 L3.5 6 L0 2.3 Z" fill="#4a4a4a"/></svg>
<svg class="a" style="left:1072px;top:517px" width="17" height="17" viewBox="0 0 17 17"><circle cx="5.5" cy="5.7" r="4.7" fill="#e8eef0" stroke="#9db0b0" stroke-width="1.5"/><path d="M9.6 9.6 L13.9 13.6" stroke="#b4561c" stroke-width="2.5" stroke-linecap="round"/><path d="M8.8 8.9 L10.2 10.2" stroke="#4a2c18" stroke-width="2.5"/></svg>
<div class="a" style="left:717px;top:545px;width:13px;height:13px;border:1px solid #333;background:#fff;"></div>
<div class="t" style="left:733px;top:545px;color:#000;font-size:11px;">Título</div>
<div class="a" style="left:711px;top:570px;width:200px;height:55px;border:1px solid #dcdcdc"></div>
<div class="t" style="left:718px;top:564px;background:#fff;padding:0 1px">Área</div>
<svg class="a" style="left:718px;top:577px" width="15" height="15" viewBox="0 0 15 15"><circle cx="7.5" cy="7.5" r="5.8" fill="#fff" stroke="#333" stroke-width="0.9"/></svg>
<div class="t" style="left:735px;top:579px;color:#000;font-size:11px;">Comercial</div>
<svg class="a" style="left:718px;top:591px" width="15" height="15" viewBox="0 0 15 15"><circle cx="7.5" cy="7.5" r="5.8" fill="#fff" stroke="#333" stroke-width="0.9"/></svg>
<div class="t" style="left:735px;top:593px;color:#000;font-size:11px;">Administrativo</div>
<svg class="a" style="left:718px;top:605px" width="15" height="15" viewBox="0 0 15 15"><circle cx="7.5" cy="7.5" r="5.8" fill="#fff" stroke="#333" stroke-width="0.9"/><circle cx="7.5" cy="7.5" r="3.2" fill="#1a1a1a"/></svg>
<div class="t" style="left:735px;top:607px;color:#000;font-size:11px;">Operacional</div>
<div class="a" style="left:1094px;top:307px;width:286px;height:325px;border:1px solid #828790;background:#fff;"></div>
<svg class="a" style="left:1107px;top:312px" width="12" height="10" viewBox="0 0 12 10"><path d="M1 1 L5.5 5 L1 9 Z" fill="none" stroke="#8a8a8a" stroke-width="1"/><rect x="8" y="5" width="1" height="1" fill="#8a8a8a"/></svg>
<div class="t" style="left:1120px;top:311px;color:#000;font-size:11px;letter-spacing:-0.35px">GRUPO 1.0.00.00.00</div>
<div class="t" style="left:714px;top:642px;color:#000;font-size:11px;">Cadastro</div>
<div class="a" style="left:761px;top:637px;width:67px;height:22px;border:1px solid #a0a0a8;background:#c0c0c0;box-shadow:inset 1px 1px 0 #fff,inset -1px -1px 0 #fff"></div>
<div class="t" style="left:764px;top:641px;color:#000080;font-size:11px;">01/01/2000</div>
<div class="t" style="left:855px;top:642px;color:#000;font-size:11px;">Atualização</div>
<div class="a" style="left:914px;top:637px;width:68px;height:22px;border:1px solid #a0a0a8;background:#c0c0c0;box-shadow:inset 1px 1px 0 #fff,inset -1px -1px 0 #fff"></div>
<div class="t" style="left:917px;top:641px;color:#000080;font-size:11px;">01/01/2000</div>
</body></html>
